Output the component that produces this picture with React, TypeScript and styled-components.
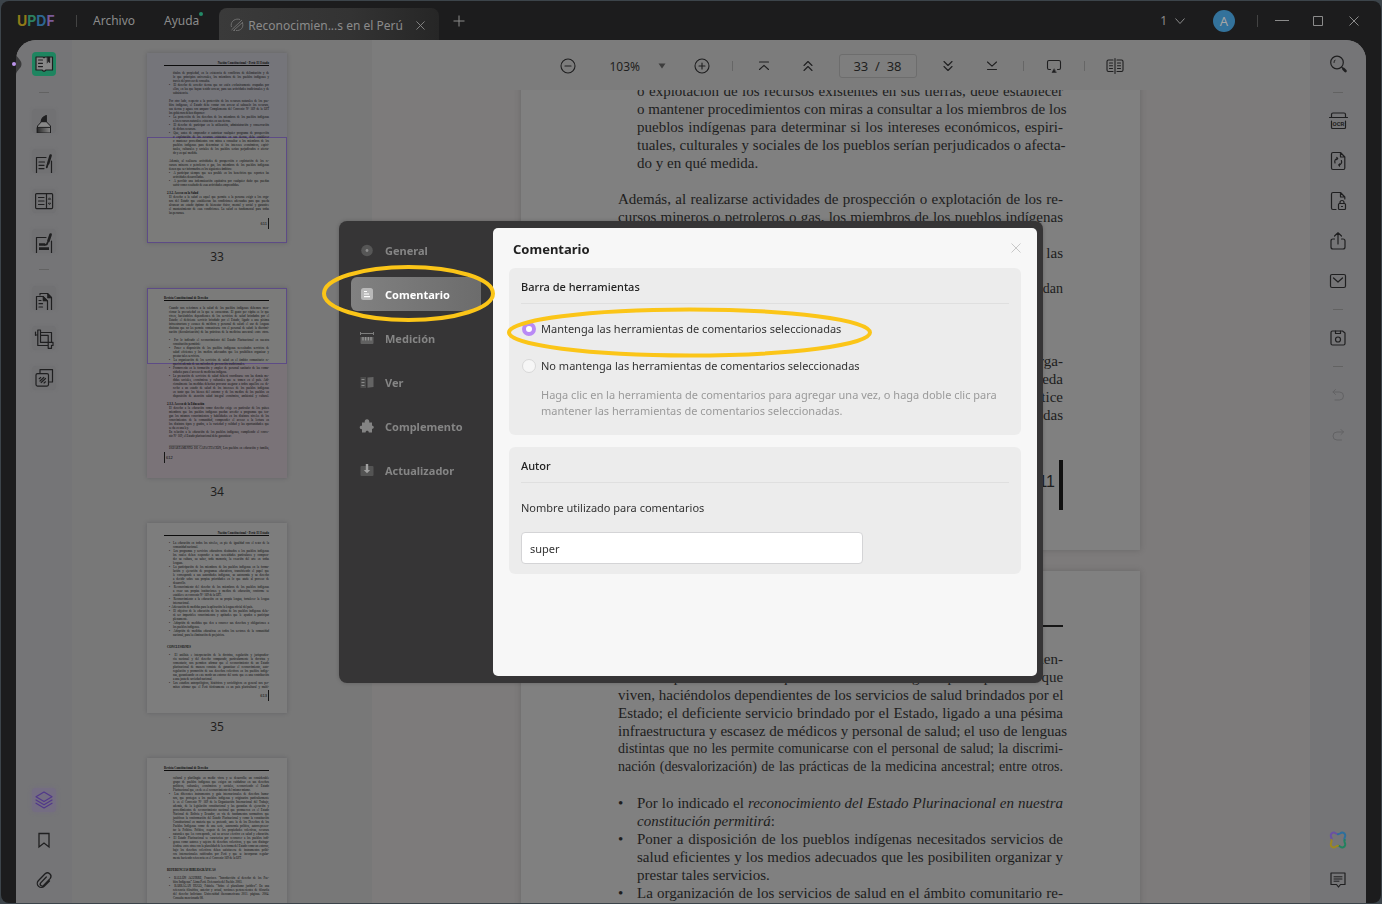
import React from "react";
import styled, { createGlobalStyle } from "styled-components";

const sans = `"Noto Sans", "Open Sans", sans-serif`;
const serif = `"Liberation Serif", "Times New Roman", serif`;
const ink = "#1f1f20";

const GlobalStyle = createGlobalStyle`
  * { box-sizing: border-box; }
  body { margin: 0; background: #3c444a; font-family: ${sans}; overflow: hidden; }
  button, input { font-family: inherit; }
  button { border: 0; padding: 0; background: none; color: inherit; cursor: pointer; }
  svg { display: block; flex: none; }
`;

/* ---------- window ---------- */

const Window = styled.div`
  height: 100vh;
  padding: 1px;
  background: #3c444a;
`;

const Frame = styled.div`
  height: 100%;
  display: flex;
  flex-direction: column;
  background: #1c1c1d;
  border-radius: 8px;
  overflow: hidden;
`;

const TitleBar = styled.header`
  height: 39px;
  flex: none;
  display: flex;
  align-items: center;
  padding: 0 16px;
  color: #8b8b8b;
  font-size: 12px;
`;

const Logo = styled.div`
  width: 43px;
  font-family: Inter, sans-serif;
  font-size: 14px;
  font-weight: 700;
`;

const LogoLetter = styled.span<{ $color: string }>`
  color: ${(p) => p.$color};
`;

const BarDivider = styled.span<{ $after?: number }>`
  width: 1px;
  height: 12px;
  margin: 0 ${(p) => p.$after ?? 16}px 0 16px;
  background: #434343;
`;

const MenuButton = styled.button`
  position: relative;
  margin-right: 29px;
  font-size: 12px;
  line-height: 20px;
`;

const NewDot = styled.span`
  position: absolute;
  top: 1px;
  right: -4px;
  width: 4px;
  height: 4px;
  border-radius: 2px;
  background: #238a67;
`;

const Tab = styled.div`
  align-self: flex-end;
  height: 32px;
  display: flex;
  align-items: center;
  gap: 4px;
  width: 220px;
  margin-left: -9px;
  padding: 2px 14px 0 11px;
  border-radius: 8px 8px 0 0;
  background: linear-gradient(90deg, #3a3a3a, #333333 60%, #262626);
  font-size: 12px;
`;

const TabName = styled.span`
  flex: 1;
  white-space: nowrap;
`;

const TitleActions = styled.div`
  margin-left: auto;
  display: flex;
  align-items: center;
`;

const CountButton = styled.button`
  display: flex;
  align-items: center;
  gap: 8px;
  font-size: 12px;
  margin-right: 28px;
`;

const Avatar = styled.button`
  width: 22px;
  height: 22px;
  border-radius: 50%;
  background: #33729b;
  color: #a5a5a5;
  font-size: 13px;
  line-height: 22px;
  margin-right: 6px;
`;

const WindowButton = styled.button`
  width: 24px;
  height: 24px;
  display: grid;
  place-items: center;
  margin-right: 12px;
  &:last-child { margin-right: -1px; }
`;

const TabAdd = styled(WindowButton)`
  margin-left: 8px;
`;

const Body = styled.div`
  position: relative;
  flex: 1;
  min-height: 0;
  margin: 0 15px;
  display: flex;
  border-radius: 20px 20px 0 0;
  overflow: hidden;
  background: #787878;
`;

const Shell = styled.div`
  position: relative;
  flex: 1;
  min-height: 0;
  display: flex;
  flex-direction: column;
`;

const Handle = styled.button`
  position: absolute;
  left: 9px;
  top: 13px;
  width: 12px;
  height: 22px;
  z-index: 1;
`;

/* ---------- tool rails ---------- */

const Rail = styled.nav`
  width: 56px;
  flex: none;
  display: flex;
  flex-direction: column;
  align-items: center;
  gap: 16px;
  padding: 12px 0 11px;
  background: #757577;
`;

const RailRule = styled.span`
  width: 10px;
  height: 1px;
  background: #626262;
`;

const RailSpacer = styled.span`
  flex: 1;
`;

const RailButton = styled.button<{ $tone?: "active" | "soft" | "violet"; $dim?: boolean }>`
  width: 24px;
  height: 24px;
  flex: none;
  border-radius: 4px;
  color: ${(p) => (p.$tone === "violet" ? "#51388a" : p.$dim ? "#626264" : ink)};
  background: ${(p) =>
    p.$tone === "active" ? "#1e8560" : p.$tone === "soft" ? "#717173" : p.$tone === "violet" ? "#746d82" : "transparent"};
  box-shadow: ${(p) => (p.$tone === "soft" ? "0 0 3px #717173" : p.$tone === "violet" ? "0 0 4px #746d82" : "none")};
`;

/* ---------- thumbnails ---------- */

const ThumbPanel = styled.aside`
  width: 300px;
  flex: none;
  display: flex;
  flex-direction: column;
  align-items: center;
  padding: 13px 10px 0 0;
  background: #787878;
  overflow: hidden;
`;

const ThumbItem = styled.figure`
  margin: 0;
  height: 235px;
  flex: none;
`;

const ThumbPage = styled.div<{ $bg: string }>`
  position: relative;
  width: 140px;
  height: 190px;
  padding: 9px 18px 0 17px;
  background: ${(p) => p.$bg};
  box-shadow: 0 0 4px rgba(50, 50, 60, 0.3);
  font-family: ${serif};
  font-size: 3px;
  line-height: 4px;
  color: #0c0c0c;
`;

const ThumbView = styled.div<{ $top: number; $height: number }>`
  position: absolute;
  left: 0;
  right: 0;
  top: ${(p) => p.$top}px;
  height: ${(p) => p.$height}px;
  border: 1px solid #5d4b86;
  background: #7b7b7a;
`;

const ThumbText = styled.div`
  position: relative;
`;

const ThumbHead = styled.div<{ $right: boolean }>`
  height: 9px;
  line-height: 3px;
  font-weight: 700;
  text-align: ${(p) => (p.$right ? "right" : "left")};
  &::after {
    content: "";
    display: block;
    height: 1px;
    background: #0c0c0c;
  }
`;

const ThumbLine = styled.div<{ $indent: number; $full: boolean; $strong: boolean }>`
  height: 4px;
  margin-left: ${(p) => p.$indent}px;
  white-space: nowrap;
  text-align-last: ${(p) => (p.$full ? "justify" : "left")};
  font-weight: ${(p) => (p.$strong ? 700 : 400)};
`;

const ThumbFoot = styled.div<{ $right: boolean; $top: number }>`
  display: flex;
  justify-content: ${(p) => (p.$right ? "flex-end" : "flex-start")};
  margin-top: ${(p) => p.$top}px;
`;

const ThumbNumber = styled.span<{ $right: boolean }>`
  height: 11px;
  padding: 0 1px;
  font: 4px/11px "Liberation Sans", sans-serif;
  border-style: solid;
  border-color: #161616;
  border-width: ${(p) => (p.$right ? "0 1px 0 0" : "0 0 0 1px")};
`;

const ThumbCaption = styled.figcaption`
  margin-top: 5px;
  text-align: center;
  font-size: 12px;
  line-height: 18px;
  color: ${ink};
`;

/* ---------- document ---------- */

const Viewer = styled.main`
  flex: 1;
  min-width: 0;
  display: flex;
  flex-direction: column;
  background: #7d7b7b;
`;

const ViewerBar = styled.div`
  height: 50px;
  flex: none;
  display: flex;
  align-items: center;
  justify-content: center;
  gap: 18px;
  padding-top: 2px;
  background: #7c7c7c;
  color: ${ink};
`;

const ToolButton = styled.button<{ $wide?: boolean }>`
  width: ${(p) => (p.$wide ? 26 : 24)}px;
  height: 24px;
  display: grid;
  place-items: center;
`;

const ZoomButton = styled.button`
  width: 74px;
  display: flex;
  align-items: center;
  gap: 18px;
  padding-left: 12px;
  font-size: 12px;
`;

const ToolDivider = styled.span`
  width: 1px;
  height: 10px;
  background: #666666;
`;

const PageField = styled.input`
  width: 78px;
  height: 24px;
  border: 1px solid #6d6d6d;
  border-radius: 3px;
  background: #7e7e7e;
  color: ${ink};
  font-size: 13px;
  text-align: center;
  white-space: pre;
`;

const Pages = styled.div`
  flex: 1;
  min-height: 0;
  overflow: hidden;
  display: flex;
  flex-direction: column;
  align-items: center;
  gap: 21px;
  padding-right: 21px;
`;

const Page = styled.article<{ $scrolled?: boolean }>`
  width: 619px;
  flex: none;
  margin-top: ${(p) => (p.$scrolled ? "-8px" : "0")};
  padding: ${(p) => (p.$scrolled ? "0 77px 40px 97px" : "54px 77px 40px 97px")};
  background: #808080;
  box-shadow: 0 0 6px rgba(60, 60, 60, 0.3);
  font-family: ${serif};
  font-size: 15px;
  line-height: 18px;
  color: #1d1d1d;
`;

const PageRule = styled.div`
  height: 2px;
  margin-bottom: 23px;
  background: #161616;
`;

const Line = styled.div<{ $indent?: boolean; $full?: boolean; $strong?: boolean; $dense?: boolean }>`
  position: relative;
  height: 18px;
  margin-left: ${(p) => (p.$indent ? 19 : 0)}px;
  white-space: nowrap;
  text-align-last: ${(p) => (p.$full ? "justify" : "left")};
  font-size: ${(p) => (p.$dense ? 14 : 15)}px;
  font-weight: ${(p) => (p.$strong ? 700 : 400)};
`;

const Bullet = styled.span`
  position: absolute;
  left: -19px;
`;

const Folio = styled.div`
  width: max-content;
  height: 50px;
  margin: 36px 0 0 auto;
  padding: 0 4px;
  border-right: 4px solid #111111;
  font-family: "Liberation Sans", sans-serif;
  font-size: 16px;
  line-height: 44px;
`;

/* ---------- settings dialog ---------- */

const Overlay = styled.div`
  position: fixed;
  inset: 0;
  display: grid;
  place-items: center;
`;

const Dialog = styled.section`
  position: relative;
  width: 704px;
  height: 462px;
  display: flex;
  padding: 7px 6px 7px 0;
  border-radius: 8px;
  background: #363536;
  box-shadow: 0 0 4px rgba(0, 0, 0, 0.2);
`;

const SideNav = styled.nav`
  width: 154px;
  display: flex;
  flex-direction: column;
  gap: 10px;
  padding: 5px 12px;
`;

const SideItem = styled.button<{ $on?: boolean }>`
  height: 34px;
  display: flex;
  align-items: center;
  gap: 10px;
  padding-left: 8px;
  border-radius: 6px;
  background: ${(p) => (p.$on ? "linear-gradient(90deg, #818181, #6c6c6c)" : "none")};
  color: ${(p) => (p.$on ? "#ffffff" : "#858585")};
  font-size: 11px;
  font-weight: 700;
`;

const Panel = styled.div`
  flex: 1;
  padding: 10px 16px;
  border-radius: 5px;
  background: #f7f7f7;
  color: #333333;
  font-size: 11px;
`;

const PanelHead = styled.div`
  height: 30px;
  display: flex;
  align-items: flex-start;
  justify-content: space-between;
  padding-left: 4px;
`;

const PanelTitle = styled.h1`
  margin: 0;
  font-size: 13px;
  font-weight: 700;
  line-height: 22px;
  color: #222222;
`;

const CloseButton = styled.button`
  margin-top: 5px;
  color: #c8c8c8;
`;

const Card = styled.section<{ $height: number }>`
  min-height: ${(p) => p.$height}px;
  margin-bottom: 12px;
  padding: 0 12px;
  border-radius: 6px;
  background: #ececec;
`;

const CardTitle = styled.h2`
  margin: 0;
  height: 36px;
  border-bottom: 1px solid #dfdfdf;
  font-size: 11px;
  font-weight: 500;
  line-height: 38px;
  color: #222222;
`;

const Choice = styled.label<{ $top: number }>`
  display: flex;
  align-items: center;
  gap: 5px;
  margin-top: ${(p) => p.$top}px;
  line-height: 18px;
`;

const Radio = styled.input`
  appearance: none;
  width: 14px;
  height: 14px;
  margin: 0 0 0 1px;
  border: 1px solid #d8d8d8;
  border-radius: 50%;
  background: #f6f6f6;
  &:checked {
    border: 4px solid #b98af5;
    background: #ffffff;
  }
`;

const Note = styled.p`
  margin: 12px 0 0 20px;
  line-height: 16px;
  color: #9a9a9a;
`;

const FieldLabel = styled.label`
  display: block;
  margin: 16px 0;
  line-height: 17px;
`;

const TextField = styled.input`
  display: block;
  width: 342px;
  height: 32px;
  padding: 0 8px;
  border: 1px solid #d4d4d6;
  border-radius: 4px;
  background: #ffffff;
  color: #333333;
  font-size: 11px;
`;

const Ring = styled.svg<{ $left: number; $top: number }>`
  position: absolute;
  left: ${(p) => p.$left}px;
  top: ${(p) => p.$top}px;
  pointer-events: none;
`;

/* ---------- icons ---------- */

const Glyph = ({ children, size = 24 }: { children: React.ReactNode; size?: number }) => (
  <svg
    width={size}
    height={size}
    viewBox={`0 0 ${size} ${size}`}
    fill="none"
    stroke="currentColor"
    strokeWidth={size === 24 ? "1.2" : "1.1"}
    strokeLinecap="round"
    strokeLinejoin="round"
    aria-hidden="true"
  >
    {children}
  </svg>
);

const ReaderIcon = () => (
  <Glyph>
    <path d="M4 5h7l1 .8 1-.8h7.5v13H14l-1.5 1.2h-1L10 18H4z" fill="#878787" />
    <path d="M6.5 8h4M6.5 11.3h4M6.5 14.6h4" />
    <path d="M15.3 5h2.6v6l-1.3-1.4-1.3 1.4z" fill="currentColor" strokeWidth="0.4" />
  </Glyph>
);
const MarkerIcon = () => (
  <Glyph>
    <defs>
      <linearGradient id="marker" x1="0" x2="1">
        <stop offset="0" stopColor="#2c2c2c" />
        <stop offset="1" stopColor="#878787" />
      </linearGradient>
    </defs>
    <path d="M14.3 6.5v6.3H9.2c0-3 2-5 5.1-6.3z" fill="currentColor" />
    <path d="M9.2 13 5.5 17v7h13v-7l-3.9-4z" fill="#888888" strokeWidth="1" />
    <path d="M5.5 18.4h13V24h-13z" fill="url(#marker)" strokeWidth="1" />
  </Glyph>
);
const EditIcon = () => (
  <Glyph>
    <path d="M14 8.5H4.5V24m15 0V12" />
    <path d="M7 13h5.5M7 16.3h5M7 19.6h5" />
    <path d="m18.600 6.500-2.400 8" strokeWidth="2.600" />
    <path d="m15.600 15.500-.8 2.800" strokeWidth="1.800" />
  </Glyph>
);
const FormIcon = () => (
  <Glyph>
    <rect x="3.600" y="4.600" width="17" height="15" rx="1" />
    <path d="M14.500 5v14.500M6.500 8.500h5.500M6.500 12h5.500M6.500 15.500h5.500" />
    <path d="m16.500 10 1-1.200 1 1.200zM16.500 14.500l1 1.200 1-1.200z" strokeWidth="0.800" />
  </Glyph>
);
const RedactIcon = () => (
  <Glyph>
    <path d="M14 8.500H4.500V24m15 0V12" />
    <path d="M7 15.500h6M7 19.600h10" strokeWidth="2.600" strokeLinecap="butt" />
    <path d="m18.600 5.500-2.200 6.500" strokeWidth="2.600" />
    <path d="m15.600 13.500-.8 1.800-1.800.5" strokeWidth="1.800" />
  </Glyph>
);
const PagesIcon = () => (
  <Glyph>
    <path d="M8 9V7.500h7.500l4 4V24" />
    <path d="M4.500 24V10.500h6.500l4.500 4.500V24" />
    <path d="M11 10.500V15h4.500zM15.500 7.500V12h4z" fill="currentColor" strokeWidth="0.600" />
    <path d="M7 14.500h2M7 17.700h3.500M7 21h3.500" />
  </Glyph>
);
const CropIcon = () => (
  <Glyph>
    <path d="M5.800 4h2.700v12.300H20M3.500 9h2.300V4M5.800 9v10.500h9.700M8.500 6.500h11v10M8.500 9.300h7.700v13h3.300v-3" />
    <path d="M3.500 6v3.200M19.500 16.300h1.500v3.200h-1.500" />
  </Glyph>
);
const LayersIcon = () => (
  <Glyph>
    <path d="M8 7V3.600h12.500V16H17" />
    <rect x="4" y="7.600" width="12.500" height="12.500" rx="1.500" />
    <path d="m7.200 12.700 1.500-1.200M8 15l3.800-3.500M9.200 16.500l4.300-4M12 17l1.500-1.200" />
  </Glyph>
);
const StackIcon = () => (
  <Glyph>
    <path d="m12 4 8 4.800-8 4.800-8-4.800zM4 12l8 4.800L20 12M4 15.200l8 4.800 8-4.800" />
  </Glyph>
);
const BookmarkIcon = () => (
  <Glyph>
    <path d="M7 5.500h10v13.500l-5-4-5 4z" strokeLinejoin="miter" strokeWidth="1.300" />
  </Glyph>
);
const ClipIcon = () => (
  <Glyph>
    <path d="m17.500 13-5.300 5.200a4 4 0 0 1-5.900-5.400l6.800-7a3.500 3.500 0 0 1 5.200 4.600l-6.700 7a1.900 1.900 0 0 1-2.900-2.500l5.600-5.900" strokeWidth="1.300" />
  </Glyph>
);
const SearchIcon = () => (
  <Glyph>
    <circle cx="11" cy="10.500" r="6.300" />
    <path d="M8 10.500c0-1 .4-1.800 1-2.400" strokeWidth="1" />
    <path d="m16 15.500 1 1" />
    <path d="m17.500 17 2 2" strokeWidth="2.600" />
  </Glyph>
);
const OcrIcon = () => (
  <Glyph>
    <path d="M5.500 8V5.500q0-1.500 1.500-1.500h11q1.500 0 1.500 1.500V8M3.500 8.500h18M5.500 12v6.500q0 1 1 1h12q1 0 1-1V12" />
    <text x="12.500" y="17" textAnchor="middle" fontFamily="Roboto, sans-serif" fontSize="6" fontWeight="700" fill="currentColor" stroke="none">
      OCR
    </text>
  </Glyph>
);
const ConvertIcon = () => (
  <Glyph>
    <path d="M14.500 3.500H7q-1.500 0-1.500 1.500v14q0 1.500 1.500 1.500h10.500q1.300 0 1.300-1.500V8zV8h4.300" />
    <path d="M9 14c-.8-2.300.3-4.200 2.700-4.400l-.9-1.100m.9 1.100-1 1M15.400 11.500c.8 2.300-.3 4.200-2.700 4.400l.9 1.100m-.9-1.100 1-1" />
  </Glyph>
);
const ProtectIcon = () => (
  <Glyph>
    <path d="M10 20.500H7q-1.500 0-1.500-1.500V5q0-1.500 1.500-1.500h7.500l4.300 4.500v2M14.500 3.500V8h4.300" />
    <rect x="12.500" y="14.500" width="7" height="6" rx="1" />
    <path d="M14 14.300v-.8a2 2 0 0 1 4 0v.8M15.500 17.500h1" />
  </Glyph>
);
const ShareIcon = () => (
  <Glyph>
    <path d="M8.500 10H7q-2 0-2 2v6q0 2 2 2h10q2 0 2-2v-6q0-2-2-2h-1.500M12 15V4m-3.500 3L12 3.800 15.500 7" />
  </Glyph>
);
const MailIcon = () => (
  <Glyph>
    <rect x="4.500" y="5.500" width="15" height="13" rx="1.500" />
    <path d="m7.500 9 4.500 4 4.500-4" />
  </Glyph>
);
const SaveIcon = () => (
  <Glyph>
    <path d="M6.500 5h10l2.500 2v10.500q0 1.500-1.500 1.500h-11q-1.500 0-1.500-1.500v-11q0-1.500 1.500-1.500z" />
    <path d="M9.500 5v2.500h5V5" />
    <circle cx="12" cy="13.500" r="2.500" />
  </Glyph>
);
const UndoIcon = () => (
  <Glyph>
    <path d="M9.500 6.500 7 9l2.500 2.500M7 9h6.500q4 0 4 4t-4 4H9" strokeWidth="1" />
  </Glyph>
);
const RedoIcon = () => (
  <Glyph>
    <path d="M15 6.500 17.500 9 15 11.500M17.500 9H11q-4 0-4 4t4 4h4.500" strokeWidth="1" />
  </Glyph>
);
const AiIcon = () => (
  <Glyph>
    <g strokeWidth="2">
      <path d="M5.300 12c1.400-1.600-1-2.800-.5-5C5.300 4.600 8 4 9.600 5.300q1.200.9 2.400.9" stroke="#6a51a3" />
      <path d="M12 6.200q1.200 0 2.400-.9C16 4 18.700 4.600 19.200 7c.5 2.200-1.900 3.400-.5 5" stroke="#2d6f9c" />
      <path d="M18.700 12c-1.400 1.600 1 2.800.5 5-.5 2.400-3.200 3-4.800 1.700q-1.200-.9-2.400-.9" stroke="#22825f" />
      <path d="M12 17.800q-1.200 0-2.400.9C8 20 5.300 19.400 4.800 17c-.5-2.200 1.900-3.400.5-5" stroke="#9c8720" />
    </g>
  </Glyph>
);
const CommentIcon = () => (
  <Glyph>
    <path d="M5 5h14v11.500h-4.500L12.500 19l-2-2.500H5z" />
    <path d="M8 8.800h8M8 11h8M8 13.200h5" strokeWidth="1" />
  </Glyph>
);

const MinusIcon = () => (
  <Glyph size={18}>
    <circle cx="9" cy="9" r="7" />
    <path d="M6 9h6" />
  </Glyph>
);
const PlusIcon = () => (
  <Glyph size={18}>
    <circle cx="9" cy="9" r="7" />
    <path d="M6 9h6M9 6v6" />
  </Glyph>
);
const FirstIcon = () => (
  <Glyph size={18}>
    <path d="M4.500 5h9M4.500 12.500 9 8.300l4.500 4.200" />
  </Glyph>
);
const PrevIcon = () => (
  <Glyph size={18}>
    <path d="M5 8.500 9 4.500l4 4M5 13.500 9 9.500l4 4" />
  </Glyph>
);
const NextIcon = () => (
  <Glyph size={18}>
    <path d="M5 4.500 9 8.500l4-4M5 9.500 9 13.500l4-4" />
  </Glyph>
);
const LastIcon = () => (
  <Glyph size={18}>
    <path d="M4.500 12.500h9M4.500 5 9 9.200 13.500 5" />
  </Glyph>
);
const PresentIcon = () => (
  <Glyph size={18}>
    <path d="M5.500 12.500H4q-1.500 0-1.500-1.500V5q0-1.500 1.500-1.500h10q1.500 0 1.500 1.500v6q0 1.500-1.500 1.500h-1.500" />
    <path d="m9 12-2 3.500h4z" fill="currentColor" strokeWidth="0.500" />
  </Glyph>
);
const SpreadIcon = () => (
  <Glyph size={20}>
    <path d="M10 2.500v15M8 4H3.500Q2 4 2 5.500V14q0 1.500 1.500 1.500H8M12 4h4.500Q18 4 18 5.500V14q0 1.500-1.500 1.500H12" />
    <path d="M4.500 7h3M4.500 9.800h3M4.500 12.500h3M12.500 7h3M12.500 9.800h3M12.500 12.500h3" />
  </Glyph>
);

const CrossIcon = ({ size = 10 }: { size?: number }) => (
  <svg width={size} height={size} viewBox="0 0 10 10" fill="none" stroke="currentColor" aria-hidden="true">
    <path d="m.5.500 9 9m0-9-9 9" />
  </svg>
);

const GeneralIcon = () => (
  <svg width="16" height="16" viewBox="0 0 16 16" aria-hidden="true">
    <circle cx="8" cy="8.500" r="5.800" fill="#565656" />
    <circle cx="8" cy="8.500" r="1.400" fill="#8f8f8f" />
  </svg>
);
const NoteIcon = () => (
  <svg width="16" height="16" viewBox="0 0 16 16" aria-hidden="true">
    <rect x="2" y="2" width="12" height="12" rx="2.500" fill="#b9b9b9" />
    <path d="M5 5.500h3M5 8h5M5 10.700h6" stroke="#ffffff" strokeWidth="1.200" />
  </svg>
);
const RulerIcon = () => (
  <svg width="16" height="16" viewBox="0 0 16 16" aria-hidden="true">
    <path d="M1.500 2v3M14.500 2v3M1.500 3.500h13" stroke="#7d7d7d" />
    <path d="M1.500 7h13v6q0 1-1 1h-11q-1 0-1-1z" fill="#606060" />
    <path d="M4 7v3.500M6.700 7v3.500M9.300 7v3.500M12 7v3.500" stroke="#a0a0a0" />
  </svg>
);
const ViewIcon = () => (
  <svg width="16" height="16" viewBox="0 0 16 16" aria-hidden="true">
    <path d="M1.500 3H7v11H1.500z" fill="#4c4c4c" />
    <path d="M8.500 3.500 14.500 3v10l-6 .8z" fill="#646464" />
    <path d="M2.500 5.500h3M2.500 8.500h3M2.500 11.500h3" stroke="#8b8b8b" />
  </svg>
);
const PuzzleIcon = () => (
  <svg width="16" height="16" viewBox="0 0 16 16" aria-hidden="true">
    <path
      d="M3 4.500h2.800C5.300 2.700 6.300 1.300 8 1.300s2.700 1.400 2.200 3.200H13v3.300c1.100-.1 1.800.5 1.800 1.500s-.7 1.700-1.800 1.500V14.500H9.800c0-1.200-.7-1.800-1.600-1.800s-1.600.6-1.600 1.800H3v-3.300c-1.400.1-2.300-.7-2.300-1.900S1.600 7.500 3 7.700z"
      fill="#848484"
    />
  </svg>
);
const UpdateIcon = () => (
  <svg width="16" height="16" viewBox="0 0 16 16" aria-hidden="true">
    <rect x="1.500" y="4" width="13" height="10" rx="1" fill="#545454" />
    <path d="M6.800 2h2.400v6h2L8 11.200 4.800 8h2z" fill="#a0a0a0" />
  </svg>
);

/* ---------- thumbnail content ----------
   Line prefixes: "-" bullet, ">" indented, "=" body, "#" heading, "" blank;
   a trailing "|" marks the last, unstretched line of a paragraph. */

type Thumb = {
  page: number;
  head: string;
  right: boolean;
  bg: string;
  view?: [number, number];
  lines: string[];
  foot?: string;
  footGap?: number;
};

const thumbs: Thumb[] = [
  {
    page: 33,
    head: "Nación Constitucional - Perú: El Estado",
    right: true,
    bg: "#75757a",
    view: [84, 106],
    foot: "611",
    footGap: 3,
    lines: [
      ">títulos de propiedad, en la existencia de conflictos de delimitación y de",
      ">lo que principios universales, los miembros de los pueblos indígenas y",
      ">través del proceso de consulta.|",
      "-El derecho de acceder tierras que no estén exclusivamente ocupadas por",
      ">ellos, en las que hayan tenido acceso, para sus actividades tradicionales y de",
      ">subsistencia.|",
      "",
      "=Por otro lado, respecto a la protección de los recursos naturales de los pue-",
      "=blos indígenas, el Estado debe contar con acceso al subsuelo los recursos,",
      "=sus tierras y aguas con amparo Complementa del Convenio N° 169 de la OIT",
      "=los gobiernos deben disponer:|",
      "-La protección de los derechos de los miembros de los pueblos indígenas",
      ">a los recursos naturales existentes en sus tierras.|",
      "-El derecho de participar en la utilización, administración y conservación",
      ">de dichos recursos.|",
      "-Que, antes de emprender o autorizar cualquier programa de prospección",
      ">o explotación de los recursos existentes en sus tierras, debe establecer",
      ">o mantener procedimientos con miras a consultar a los miembros de los",
      ">pueblos indígenas para determinar si los intereses económicos, espiri-",
      ">tuales, culturales y sociales de los pueblos serían perjudicados o afecta-",
      ">do y en qué medida.|",
      "",
      "=Además, al realizarse actividades de prospección o explotación de los re-",
      "=cursos mineros o petroleros o gas, los miembros de los pueblos indígenas",
      "=tienen que ser informados en los siguientes ámbitos:|",
      "-A participar siempre que sea posible en los beneficios que reporten las",
      ">actividades desarrolladas.|",
      "-A percibir una indemnización equitativa por cualquier daño que puedan",
      ">sufrir como resultado de esas actividades emprendidas.|",
      "",
      "#2.3.2. Acceso en la Salud|",
      "=El derecho a la salud es aquel que permite a la persona exigir a los orga-",
      "=nos del Estado que establezcan las condiciones adecuadas para que pueda",
      "=alcanzar un estado óptimo de bienestar físico, mental y social y garantice",
      "=el mantenimiento de esas condiciones. La salud es fundamental para todas",
      "=las personas.|",
    ],
  },
  {
    page: 34,
    head: "Revista Constitucional de Derecho",
    right: false,
    bg: "#7a7378",
    view: [0, 76],
    foot: "612",
    footGap: 2,
    lines: [
      "=Cuando nos referimos a la salud de los pueblos indígenas debemos men-",
      "=cionar la precariedad en la que se encuentran. El gasto per cápita es lo que",
      "=viven, haciéndolos dependientes de los servicios de salud brindados por el",
      "=Estado; el deficiente servicio brindado por el Estado, ligado a una pésima",
      "=infraestructura y escasez de médicos y personal de salud; el uso de lenguas",
      "=distintas que no les permite comunicarse con el personal de salud; la discrimi-",
      "=nación (desvalorización) de las prácticas de la medicina ancestral; entre otros.",
      "",
      "-Por lo indicado el reconocimiento del Estado Plurinacional en nuestra",
      ">constitución permitirá:|",
      "-Poner a disposición de los pueblos indígenas necesitados servicios de",
      ">salud eficientes y los medios adecuados que les posibiliten organizar y",
      ">prestar tales servicios.|",
      "-La organización de los servicios de salud en el ámbito comunitario re-",
      ">querirá además de sus métodos de prevención tradicionales.|",
      "-Promoverán en la formación y empleo de personal sanitario de las comu-",
      ">nidades para el acceso de medicina indígena.|",
      "-La prestación de servicios de salud deberá coordinarse con las demás me-",
      ">didas sociales, económicas y culturales que se tomen en el país. Adi-",
      ">cionalmente las medidas deberían procurar asegurar a todos aquellos ese de-",
      ">recho a un estado de salud de los intereses de los pueblos indígenas",
      ">en tanto que los bienes del entorno y de los medios de los pueblos en",
      ">disposición de atención salud integral económica, ambiental y cultural.",
      "",
      "#2.3.3. Acceso de la Educación|",
      "=El derecho a la educación como derecho exige en particular de los países",
      "=miembros que los pueblos indígenas puedan acceder a programas que ten-",
      "=gan los mismos conocimientos y habilidades en los distintos niveles de los",
      "=conocimientos de la comunidad, comprender el acceso a la lectura en",
      "=los distintos tipos y grados, a la variedad y calidad y las oportunidades que",
      "=se da en una ley.|",
      "=En relación a la educación de los pueblos indígenas, cumpliendo el conve-",
      "=nio N° 169, el Estado plurinacional debe garantizar:|",
      "",
      "=______________________|",
      "=DEPARTAMENTO DE CAPACITACIÓN, Los pueblos en educación y familia,",
    ],
  },
  {
    page: 35,
    head: "Nación Constitucional - Perú: El Estado",
    right: true,
    bg: "#7d7d7d",
    foot: "613",
    footGap: 1,
    lines: [
      "-La educación en todos los niveles, en pie de igualdad con el resto de la",
      ">comunidad nacional.|",
      "-Los programas y servicios educativos destinados a los pueblos indígenas",
      ">los cuales deben responder a sus necesidades particulares y compren-",
      ">der su cultura, su saber, toda memoria, la creación del arte en todas",
      ">lenguas.|",
      "-La participación de los miembros de los pueblos indígenas en la formu-",
      ">lación y ejecución de programas educativos, transfiriendo el papel que",
      ">le corresponde a sus autoridades indígenas, su autonomía y su derecho",
      ">a decidir sobre sus propias prioridades en lo que atañe al proceso de",
      ">desarrollo.|",
      "-Reconocimiento del derecho de los miembros de los pueblos indígenas",
      ">a crear sus propias instituciones y medios de educación, conforme se",
      ">establece en convenio N° 169 de la OIT.|",
      "-Reconocimiento a la educación en su propia lengua, fortalecer la lengua",
      ">internacional.|",
      "-Adecuación de medidas para la aplicación la lengua oficial del país.|",
      "-El objetivo de la educación de los niños de los pueblos indígenas debe-",
      ">rá ser impartirles conocimientos y aptitudes que le ayuden a participar",
      ">plenamente.|",
      "-Adopción de medidas que den a conocer sus derechos y obligaciones a",
      ">los pueblos indígenas.|",
      "-Adopción de medidas educativas en todos los sectores de la comunidad",
      ">nacional, para la eliminación de prejuicios.|",
      "",
      "",
      "#CONCLUSIONES|",
      "",
      "-El análisis e interpretación de la doctrina, regulación y jurispruden-",
      ">cia nacional y del derecho comparado, particularmente la doctrina y",
      ">comentario, nos permiten afirmar que el reconocimiento de un Estado",
      ">plurinacional de manera consiste de garantizar el reconocimiento, auto-",
      ">regulación y promoción de sus derechos colectivos en los pueblos indíge-",
      ">nas, garantizando en este modo un entorno del norte que es una contribución",
      ">a una justa de sociedad nacional.|",
      "-Los estudios antropológicos, históricos y sociológicos en general nos per-",
      ">miten afirmar que el Perú fácticamente es un país pluricultural y multi-",
    ],
  },
  {
    page: 36,
    head: "Revista Constitucional de Derecho",
    right: false,
    bg: "#7d7d7d",
    lines: [
      ">cultural y plurilingüe en medio vivos y se desarrolla; un considerable",
      ">grupo de pueblos indígenas que exigen un cuidadoso en sus  derechos",
      ">políticos, culturales, económicos y sociales, reconociendo el Estado",
      ">Plurinacional que, en de es el reconocimiento del mismo mismo.|",
      "-Las diferentes instrumentos y guía internacionales de derechos huma-",
      ">nos, que protegen a los pueblos indígenas y originarios particularmente",
      ">le es el Convenio N° 169 de la Organización Internacional del Trabajo,",
      ">además, de la legislación constitucional y las garantías de ejecución y",
      ">procedimientos de reconocimiento nacional que promueven en el Estado",
      ">Nacional de Bolivia y Ecuador, en vía de fundamentos normativos que",
      ">justifican la conformación del Estado Plurinacional y como la constitución",
      ">Constitucional en materia que se pretende, ante la de los Derechos de los",
      ">Pueblos Indígenas como de una serie, autonomía política, autorrepresen-",
      ">tar la Política. Política, respeto de los propiedades colectivas, recursos",
      ">naturales que les corresponde, así su acceso efectivo en salud y educación.",
      "-El Estado Plurinacional se caracteriza por reconocer a los pueblos indí-",
      ">genas como autores y sujetos de derechos colectivos, y que son distingu-",
      ">iéndose entre otras con la pluralidad de la reforma del Estado como un entorno,",
      ">bajo los derechos colectivos deben satisfacerse de instrumentos políti-",
      ">cos internacionales ratificados por Perú y que se incorporan regular-",
      ">mente haciendo referencia en el Convenio 169 de la OIT.|",
      "",
      "",
      "#REFERENCIAS BIBLIOGRÁFICAS|",
      "",
      "-BALLÓN AGUIRRE, Francisco. “Introducción al derecho de los Pue-",
      ">blos Indígenas”. Lima Perú. Defensoría del Pueblo. 2003.|",
      "-BARRAGÁN HUGO, Fabiola. “Sobre el pluralismo jurídico”. En una",
      ">referencia filosófica, anterior y actual, nociones pertenecientes de filosofía",
      ">del derecho boliviano. Universidad iberoamericana 2011. páginas. 2004.",
      ">Consulta mencionada 08.|",
    ],
  },
];

const PageThumb = ({ thumb }: { thumb: Thumb }) => (
  <ThumbItem>
    <ThumbPage $bg={thumb.bg}>
      {thumb.view && <ThumbView $top={thumb.view[0]} $height={thumb.view[1]} />}
      <ThumbText>
        <ThumbHead $right={thumb.right}>{thumb.head}</ThumbHead>
        {thumb.lines.map((raw, i) => {
          const kind = raw.charAt(0);
          const last = raw.endsWith("|");
          const text = raw.slice(1, last ? -1 : undefined);
          const indent = kind === "#" ? 3 : kind === "=" ? 5 : kind === "-" ? 5 : 9;
          return (
            <ThumbLine key={i} $indent={indent} $full={!last} $strong={kind === "#"}>
              {kind === "-" ? "•\u00a0\u00a0" + text : text}
            </ThumbLine>
          );
        })}
        {thumb.foot && (
          <ThumbFoot $right={thumb.right} $top={thumb.footGap ?? 0}>
            <ThumbNumber $right={thumb.right}>{thumb.foot}</ThumbNumber>
          </ThumbFoot>
        )}
      </ThumbText>
    </ThumbPage>
    <ThumbCaption>{thumb.page}</ThumbCaption>
  </ThumbItem>
);

const sideItems = [
  { name: "General", icon: <GeneralIcon /> },
  { name: "Comentario", icon: <NoteIcon />, on: true },
  { name: "Medición", icon: <RulerIcon /> },
  { name: "Ver", icon: <ViewIcon /> },
  { name: "Complemento", icon: <PuzzleIcon /> },
  { name: "Actualizador", icon: <UpdateIcon /> },
];

export default function App() {
  return (
    <Window>
      <GlobalStyle />
      <Frame>
        <TitleBar>
          <Logo>
            <LogoLetter $color="#8f7a18">U</LogoLetter>
            <LogoLetter $color="#2c7f60">P</LogoLetter>
            <LogoLetter $color="#2d6791">D</LogoLetter>
            <LogoLetter $color="#7a5a98">F</LogoLetter>
          </Logo>
          <BarDivider />
          <MenuButton>Archivo</MenuButton>
          <MenuButton>
            Ayuda
            <NewDot />
          </MenuButton>
          <Tab>
            <svg width="14" height="14" viewBox="0 0 14 14" fill="none" stroke="#6f6f6f" aria-hidden="true">
              <path d="M1.500 9C0 4.500 4 .5 8.500 1.200L10 1.500M12.500 5c1.500 4.500-2 8-6.500 7.500M1.500 12 12 2M5 12.500h-1.500L13 4" />
            </svg>
            <TabName>Reconocimien...s en el Perú</TabName>
            <button aria-label="Cerrar pestaña">
              <CrossIcon size={9} />
            </button>
          </Tab>
          <TabAdd aria-label="Nueva pestaña">
            <svg width="12" height="12" viewBox="0 0 12 12" stroke="currentColor" aria-hidden="true">
              <path d="M6 .5v11M.5 6h11" />
            </svg>
          </TabAdd>
          <TitleActions>
            <CountButton>
              1
              <svg width="10" height="8" viewBox="0 0 10 8" fill="none" stroke="currentColor" aria-hidden="true">
                <path d="m.5 1.500 4.500 5 4.500-5" />
              </svg>
            </CountButton>
            <Avatar>A</Avatar>
            <BarDivider $after={12} />
            <WindowButton aria-label="Minimizar">
              <svg width="14" height="14" viewBox="0 0 14 14" stroke="currentColor" aria-hidden="true">
                <path d="M0 6.500h14" />
              </svg>
            </WindowButton>
            <WindowButton aria-label="Maximizar">
              <svg width="10" height="10" viewBox="0 0 10 10" fill="none" stroke="currentColor" aria-hidden="true">
                <path d="M.5.500h9v9h-9z" />
              </svg>
            </WindowButton>
            <WindowButton aria-label="Cerrar">
              <CrossIcon />
            </WindowButton>
          </TitleActions>
        </TitleBar>

        <Shell>
          <Handle aria-label="Ocultar barra">
            <svg width="12" height="22" viewBox="0 0 12 22" aria-hidden="true">
              <path d="M6 0c0 5 5.500 6 5.500 11S6 17 6 22z" fill="#3a3a3b" />
              <circle cx="4" cy="11" r="2" fill="#bb93ea" />
            </svg>
          </Handle>
          <Body>
            <Rail>
              <RailButton $tone="active" aria-label="Lector"><ReaderIcon /></RailButton>
              <RailRule />
              <RailButton $tone="soft" aria-label="Comentario"><MarkerIcon /></RailButton>
              <RailButton $tone="soft" aria-label="Editar"><EditIcon /></RailButton>
              <RailButton $tone="soft" aria-label="Formulario"><FormIcon /></RailButton>
              <RailButton $tone="soft" aria-label="Redactar"><RedactIcon /></RailButton>
              <RailRule />
              <RailButton $tone="soft" aria-label="Organizar páginas"><PagesIcon /></RailButton>
              <RailButton $tone="soft" aria-label="Recortar"><CropIcon /></RailButton>
              <RailButton $tone="soft" aria-label="Marca de agua"><LayersIcon /></RailButton>
              <RailSpacer />
              <RailButton $tone="violet" aria-label="Miniaturas"><StackIcon /></RailButton>
              <RailButton aria-label="Marcadores"><BookmarkIcon /></RailButton>
              <RailButton aria-label="Adjuntos"><ClipIcon /></RailButton>
            </Rail>

            <ThumbPanel>
              {thumbs.map((t) => (
                <PageThumb key={t.page} thumb={t} />
              ))}
            </ThumbPanel>

            <Viewer>
              <ViewerBar>
                <ToolButton aria-label="Alejar"><MinusIcon /></ToolButton>
                <ZoomButton>
                  103%
                  <svg width="8" height="6" viewBox="0 0 8 6" aria-hidden="true">
                    <path d="M.5.500h7L4 5.500z" fill="#3d3d3d" />
                  </svg>
                </ZoomButton>
                <ToolButton aria-label="Acercar"><PlusIcon /></ToolButton>
                <ToolDivider />
                <ToolButton $wide aria-label="Primera página"><FirstIcon /></ToolButton>
                <ToolButton $wide aria-label="Página anterior"><PrevIcon /></ToolButton>
                <PageField aria-label="Página" defaultValue="33  /  38" />
                <ToolButton $wide aria-label="Página siguiente"><NextIcon /></ToolButton>
                <ToolButton $wide aria-label="Última página"><LastIcon /></ToolButton>
                <ToolDivider />
                <ToolButton aria-label="Presentación"><PresentIcon /></ToolButton>
                <ToolDivider />
                <ToolButton aria-label="Vista de página"><SpreadIcon /></ToolButton>
              </ViewerBar>

              <Pages>
                <Page $scrolled>
                  <Line $indent $full>o explotación de los recursos existentes en sus tierras, debe establecer</Line>
                  <Line $indent $full>o mantener procedimientos con miras a consultar a los miembros de los</Line>
                  <Line $indent $full>pueblos indígenas para determinar si los intereses económicos, espiri-</Line>
                  <Line $indent $full>tuales, culturales y sociales de los pueblos serían perjudicados o afecta-</Line>
                  <Line $indent>do y en qué medida.</Line>
                  <Line />
                  <Line $full>Además, al realizarse actividades de prospección o explotación de los re-</Line>
                  <Line $full>cursos mineros o petroleros o gas, los miembros de los pueblos indígenas</Line>
                  <Line>tienen que ser informados en los siguientes ámbitos:</Line>
                  <Line $indent $full><Bullet>•</Bullet>A participar siempre que sea posible en los beneficios que reporten las</Line>
                  <Line $indent>actividades desarrolladas.</Line>
                  <Line $indent $full $dense><Bullet>•</Bullet>A percibir una indemnización equitativa por cualquier daño que puedan</Line>
                  <Line $indent>sufrir como resultado de esas actividades.</Line>
                  <Line />
                  <Line $strong>2.3.2. Acceso en la Salud</Line>
                  <Line $full>El derecho a la salud es aquel que permite a la persona exigir a los orga-</Line>
                  <Line $full>nos del Estado que establezcan las condiciones adecuadas para que pueda</Line>
                  <Line $full>alcanzar un estado óptimo de bienestar físico, mental y social y garantice</Line>
                  <Line $full>el mantenimiento de esas condiciones. La salud es esencial para todas</Line>
                  <Folio>611</Folio>
                </Page>
                <Page>
                  <PageRule />
                  <Line $full>Cuando nos referimos a la salud de los pueblos indígenas debemos men-</Line>
                  <Line $full>cionar la precariedad en la que se encuentran. El gasto per cápita es lo que</Line>
                  <Line $full>viven, haciéndolos dependientes de los servicios de salud brindados por el</Line>
                  <Line $full>Estado; el deficiente servicio brindado por el Estado, ligado a una pésima</Line>
                  <Line $full>infraestructura y escasez de médicos y personal de salud; el uso de lenguas</Line>
                  <Line $full $dense>distintas que no les permite comunicarse con el personal de salud; la discrimi-</Line>
                  <Line $full $dense>nación (desvalorización) de las prácticas de la medicina ancestral; entre otros.</Line>
                  <Line />
                  <Line $indent $full><Bullet>•</Bullet>Por lo indicado el <em>reconocimiento del Estado Plurinacional en nuestra</em></Line>
                  <Line $indent><em>constitución permitirá</em>:</Line>
                  <Line $indent $full><Bullet>•</Bullet>Poner a disposición de los pueblos indígenas necesitados servicios de</Line>
                  <Line $indent $full>salud eficientes y los medios adecuados que les posibiliten organizar y</Line>
                  <Line $indent>prestar tales servicios.</Line>
                  <Line $indent $full><Bullet>•</Bullet>La organización de los servicios de salud en el ámbito comunitario re-</Line>
                </Page>
              </Pages>
            </Viewer>

            <Rail>
              <RailButton aria-label="Buscar"><SearchIcon /></RailButton>
              <RailRule />
              <RailButton aria-label="OCR"><OcrIcon /></RailButton>
              <RailButton aria-label="Convertir"><ConvertIcon /></RailButton>
              <RailButton aria-label="Proteger"><ProtectIcon /></RailButton>
              <RailButton aria-label="Compartir"><ShareIcon /></RailButton>
              <RailButton aria-label="Correo"><MailIcon /></RailButton>
              <RailRule />
              <RailButton aria-label="Guardar"><SaveIcon /></RailButton>
              <RailRule />
              <RailButton $dim aria-label="Deshacer"><UndoIcon /></RailButton>
              <RailButton $dim aria-label="Rehacer"><RedoIcon /></RailButton>
              <RailSpacer />
              <RailButton aria-label="Asistente"><AiIcon /></RailButton>
              <RailButton aria-label="Lista de comentarios"><CommentIcon /></RailButton>
            </Rail>
          </Body>
        </Shell>
      </Frame>

      <Overlay>
        <Dialog role="dialog" aria-labelledby="settings-title">
          <SideNav>
            {sideItems.map((item) => (
              <SideItem key={item.name} $on={item.on}>
                {item.icon}
                {item.name}
              </SideItem>
            ))}
          </SideNav>
          <Panel>
            <PanelHead>
              <PanelTitle id="settings-title">Comentario</PanelTitle>
              <CloseButton aria-label="Cerrar">
                <CrossIcon />
              </CloseButton>
            </PanelHead>
            <Card $height={167}>
              <CardTitle>Barra de herramientas</CardTitle>
              <Choice $top={16}>
                <Radio type="radio" name="keep" defaultChecked />
                Mantenga las herramientas de comentarios seleccionadas
              </Choice>
              <Choice $top={19}>
                <Radio type="radio" name="keep" />
                No mantenga las herramientas de comentarios seleccionadas
              </Choice>
              <Note>
                Haga clic en la herramienta de comentarios para agregar una vez, o haga doble clic para
                mantener las herramientas de comentarios seleccionadas.
              </Note>
            </Card>
            <Card $height={127}>
              <CardTitle>Autor</CardTitle>
              <FieldLabel htmlFor="author">Nombre utilizado para comentarios</FieldLabel>
              <TextField id="author" defaultValue="super" />
            </Card>
          </Panel>
          <Ring $left={-17} $top={44} width="173" height="58" viewBox="0 0 173 58" fill="none" stroke="#fbc518" strokeWidth="4">
            <ellipse cx="86.500" cy="28.500" rx="84.500" ry="26.500" />
          </Ring>
          <Ring $left={168} $top={86} width="365" height="51" viewBox="0 0 365 51" fill="none" stroke="#fbc518" strokeWidth="4">
            <ellipse cx="182.500" cy="25.500" rx="180.500" ry="23" />
          </Ring>
        </Dialog>
      </Overlay>
    </Window>
  );
}
